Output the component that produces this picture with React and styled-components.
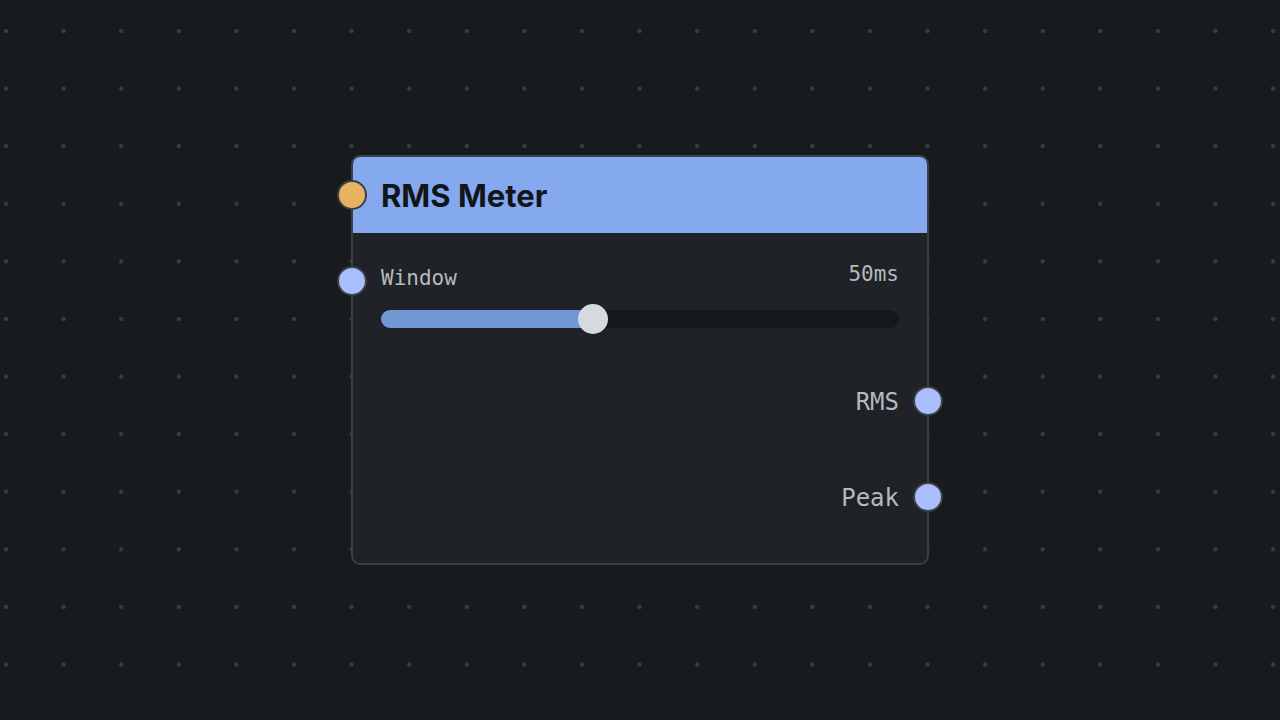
import React from "react";
import styled, { createGlobalStyle } from "styled-components";

const Global = createGlobalStyle`
  html, body { margin: 0; padding: 0; }
  body { background: #181b1e; }
`;

const MONO = `"DejaVu Sans Mono", "Liberation Mono", monospace`;

const Canvas = styled.div`
  position: relative;
  width: 1280px;
  height: 720px;
  overflow: hidden;
  background-color: #181b1e;
  background-image: radial-gradient(circle, #3a3d41 0 1.8px, transparent 2.4px);
  background-size: 57.6px 57.6px;
  background-position: -22.8px 2.2px;
`;

const Node = styled.div`
  position: absolute;
  left: ${p => p.x}px;
  top: ${p => p.y}px;
  width: 574px;
  height: 406px;
  border: 2px solid #3b4047;
  border-radius: 9px;
  background: #1f2226;
  display: flex;
  flex-direction: column;
`;

const Header = styled.div`
  position: relative;
  height: 76px;
  display: flex;
  align-items: center;
  padding: 0 28px;
  background: #84a9ee;
  border-radius: 7px 7px 0 0;
`;

const Title = styled.h1`
  margin: 0;
  font-family: Inter, "Liberation Sans", sans-serif;
  font-weight: 700;
  font-size: 31px;
  color: #121519;
`;

const Port = styled.span`
  position: absolute;
  ${p => (p.side === "left" ? "left: -17px;" : "right: -17px;")}
  top: 50%;
  margin-top: ${p => -15 + (p.dy || 0)}px;
  width: 26px;
  height: 26px;
  border-radius: 50%;
  border: 2px solid #3b4047;
  background: ${p => p.color};
`;

const Body = styled.div`
  flex: 1;
  display: flex;
  flex-direction: column;
  padding: 28px 28px 0;
`;

const ParamHead = styled.div`
  position: relative;
  height: 32px;
  display: flex;
  justify-content: space-between;
  align-items: center;
`;

const Label = styled.span`
  font-family: ${MONO};
  font-size: ${p => p.size || 21}px;
  color: #b5babf;
  margin-top: ${p => p.shift || 0}px;
`;

const SliderWrap = styled.div`
  position: relative;
  height: 30px;
  margin-top: 11px;
  display: flex;
  align-items: center;
`;

const Track = styled.div`
  position: relative;
  width: 100%;
  height: 18px;
  border-radius: 9px;
  background: #15171a;
`;

const Fill = styled.div`
  height: 100%;
  border-radius: 9px 0 0 9px;
  background: #7299d5;
`;

const Thumb = styled.div`
  position: absolute;
  top: 50%;
  width: 30px;
  height: 30px;
  margin: -15px 0 0 -15px;
  border-radius: 50%;
  background: #d6d9de;
`;

const Output = styled.div`
  position: relative;
  height: 40px;
  margin-top: ${p => p.gap}px;
  display: flex;
  justify-content: flex-end;
  align-items: center;
`;

export default function App() {
  const pct = 212 / 518;
  return (
    <Canvas>
      <Global />
      <Node x={351} y={155}>
        <Header>
          <Port side="left" color="#e8b263" style={{ left: -16 }} />
          <Title>RMS Meter</Title>
        </Header>
        <Body>
          <ParamHead>
            <Port side="left" color="#a8befd" dy={4} style={{ left: -44 }} />
            <Label shift={2}>Window</Label>
            <Label shift={-6}>50ms</Label>
          </ParamHead>
          <SliderWrap>
            <Track>
              <Fill style={{ width: `${pct * 100}%` }} />
              <Thumb style={{ left: `${pct * 100}%` }} />
            </Track>
          </SliderWrap>
          <Output gap={47}>
            <Label size={24} shift={1}>RMS</Label>
            <Port side="right" color="#a8befd" style={{ right: -44 }} />
          </Output>
          <Output gap={56}>
            <Label size={24} shift={1}>Peak</Label>
            <Port side="right" color="#a8befd" style={{ right: -44 }} />
          </Output>
        </Body>
      </Node>
    </Canvas>
  );
}
